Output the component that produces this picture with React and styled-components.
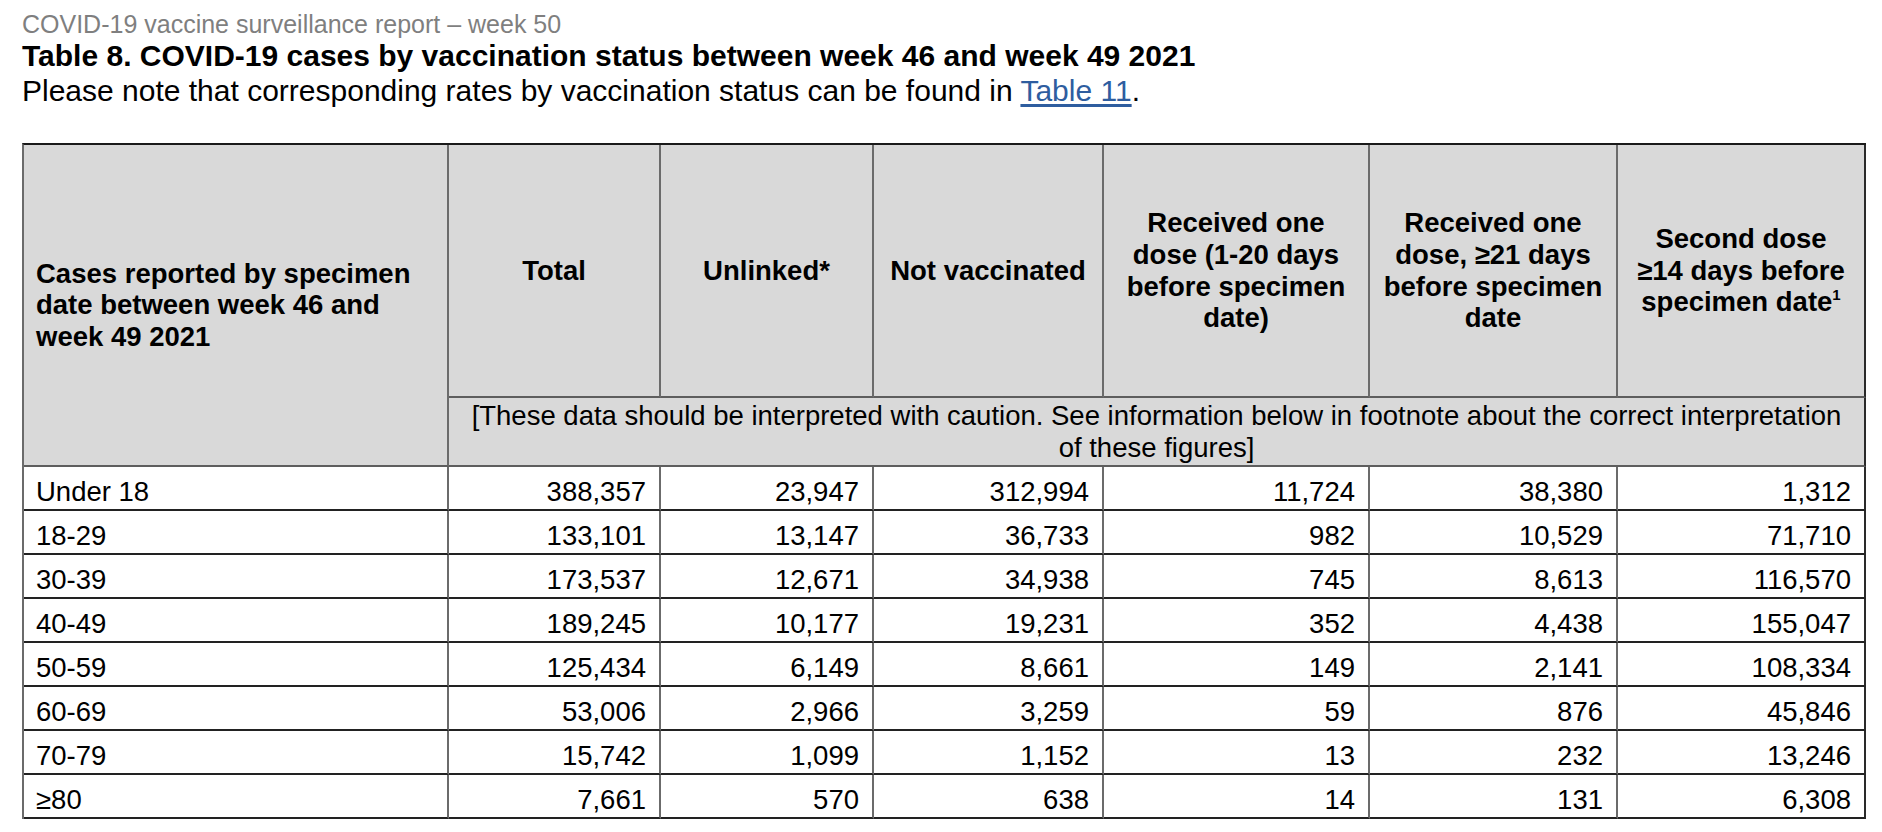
import React from "react";
import styled, { createGlobalStyle } from "styled-components";

const GlobalStyle = createGlobalStyle`
  html, body {
    margin: 0;
    padding: 0;
    background: #ffffff;
  }
`;

const columns = [425, 212, 213, 230, 266, 248, 248];

const headings = [
  "Total",
  "Unlinked*",
  "Not vaccinated",
  "Received one dose (1-20 days before specimen date)",
  "Received one dose, ≥21 days before specimen date",
];

const rows = [
  ["Under 18", "388,357", "23,947", "312,994", "11,724", "38,380", "1,312"],
  ["18-29", "133,101", "13,147", "36,733", "982", "10,529", "71,710"],
  ["30-39", "173,537", "12,671", "34,938", "745", "8,613", "116,570"],
  ["40-49", "189,245", "10,177", "19,231", "352", "4,438", "155,047"],
  ["50-59", "125,434", "6,149", "8,661", "149", "2,141", "108,334"],
  ["60-69", "53,006", "2,966", "3,259", "59", "876", "45,846"],
  ["70-79", "15,742", "1,099", "1,152", "13", "232", "13,246"],
  ["≥80", "7,661", "570", "638", "14", "131", "6,308"],
];

const App = () => {
  return (
    <Page>
      <GlobalStyle />
      <Running>COVID-19 vaccine surveillance report – week 50</Running>
      <Title>
        Table 8. COVID-19 cases by vaccination status between week 46 and week
        49 2021
      </Title>
      <Note>
        Please note that corresponding rates by vaccination status can be found
        in <Link href="#table-11">Table 11</Link>.
      </Note>

      <Table>
        <colgroup>
          {columns.map((w, i) => (
            <Col key={i} $w={w} />
          ))}
        </colgroup>
        <thead>
          <tr>
            <HeadCell rowSpan={2} $align="left">
              Cases reported by specimen date between week 46 and week 49 2021
            </HeadCell>
            {headings.map((text) => (
              <HeadCell key={text} $tall>
                {text}
              </HeadCell>
            ))}
            <HeadCell $tall $last>
              Second dose ≥14 days before specimen date<Sup>1</Sup>
            </HeadCell>
          </tr>
          <tr>
            <CautionCell colSpan={6}>
              [These data should be interpreted with caution. See information
              below in footnote about the correct interpretation
              <br />
              of these figures]
            </CautionCell>
          </tr>
        </thead>
        <tbody>
          {rows.map(([age, ...values]) => (
            <tr key={age}>
              <Cell>{age}</Cell>
              {values.map((v, i) => (
                <Cell key={i} $num $last={i === values.length - 1}>
                  {v}
                </Cell>
              ))}
            </tr>
          ))}
        </tbody>
      </Table>
    </Page>
  );
};

const Page = styled.div`
  padding: 9px 0 0 22px;
  font-family: "Liberation Sans", Arial, sans-serif;
  color: #000000;
`;

const Running = styled.div`
  font-size: 25px;
  line-height: 30px;
  color: #7f7f7f;
`;

const Title = styled.div`
  font-size: 30px;
  line-height: 34.5px;
  font-weight: bold;
`;

const Note = styled.p`
  margin: 0;
  font-size: 30px;
  line-height: 34.5px;
`;

const Link = styled.a`
  color: #2e5d9f;
  text-decoration: underline;
  text-underline-offset: 3px;
`;

const Table = styled.table`
  margin-top: 35px;
  width: 1844px;
  table-layout: fixed;
  border-collapse: separate;
  border-spacing: 0;
  border-top: 2px solid #1a1a1a;
  border-left: 2px solid #6b6b6b;
  font-size: 27.5px;
`;

const Col = styled.col`
  width: ${(p) => p.$w}px;
`;

const HeadCell = styled.th`
  box-sizing: border-box;
  height: ${(p) => (p.$tall ? "253px" : "auto")};
  padding: 0 12px;
  background: #d9d9d9;
  font-weight: bold;
  line-height: 31.6px;
  text-align: ${(p) => p.$align || "center"};
  vertical-align: middle;
  border-right: 2px solid ${(p) => (p.$last ? "#2a2a2a" : "#6b6b6b")};
  border-bottom: 2px solid #5e5e5e;
`;

const Sup = styled.span`
  display: inline-block;
  font-size: 15px;
  line-height: 15px;
  vertical-align: 11px;
`;

const CautionCell = styled.td`
  box-sizing: border-box;
  height: 69px;
  padding: 1px 12px 0;
  background: #d9d9d9;
  line-height: 31.6px;
  text-align: center;
  vertical-align: middle;
  border-right: 2px solid #2a2a2a;
  border-bottom: 2px solid #5e5e5e;
`;

const Cell = styled.td`
  box-sizing: border-box;
  height: 44px;
  padding: 9px ${(p) => (p.$num ? "13px" : "12px")} 1px 12px;
  line-height: 32px;
  text-align: ${(p) => (p.$num ? "right" : "left")};
  vertical-align: top;
  white-space: nowrap;
  border-right: 2px solid ${(p) => (p.$last ? "#2a2a2a" : "#6b6b6b")};
  border-bottom: 2px solid #222222;
`;

export default App;
